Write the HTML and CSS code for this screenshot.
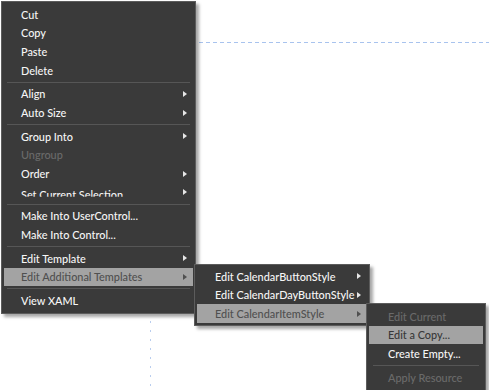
FILE: index.html
```html
<!DOCTYPE html>
<html>
<head>
<meta charset="utf-8">
<link rel="stylesheet" href="styles.css">
</head>
<body>
<div class="canvas">
  <div class="guide guide-h"></div>
  <div class="guide guide-v"></div>
</div>

<div class="menu main">
  <div class="item"><span class="label">Cut</span></div>
  <div class="item"><span class="label">Copy</span></div>
  <div class="item"><span class="label">Paste</span></div>
  <div class="item"><span class="label">Delete</span></div>
  <div class="sep"></div>
  <div class="item"><span class="label">Align</span><span class="arrow"></span></div>
  <div class="item"><span class="label">Auto Size</span><span class="arrow"></span></div>
  <div class="sep"></div>
  <div class="item"><span class="label">Group Into</span><span class="arrow"></span></div>
  <div class="item dis"><span class="label">Ungroup</span></div>
  <div class="item"><span class="label">Order</span><span class="arrow"></span></div>
  <div class="item"><span class="label clipped">Set Current Selection</span><span class="arrow"></span></div>
  <div class="sep"></div>
  <div class="item"><span class="label">Make Into UserControl...</span></div>
  <div class="item"><span class="label">Make Into Control...</span></div>
  <div class="sep"></div>
  <div class="item"><span class="label">Edit Template</span><span class="arrow"></span></div>
  <div class="item hl"><span class="label">Edit Additional Templates</span><span class="arrow"></span></div>
  <div class="sep"></div>
  <div class="item"><span class="label">View XAML</span></div>
</div>

<div class="menu sub1">
  <div class="item"><span class="label">Edit CalendarButtonStyle</span><span class="arrow"></span></div>
  <div class="item"><span class="label">Edit CalendarDayButtonStyle</span><span class="arrow"></span></div>
  <div class="item hl"><span class="label">Edit CalendarItemStyle</span><span class="arrow"></span></div>
</div>

<div class="menu sub2">
  <div class="item dis"><span class="label">Edit Current</span></div>
  <div class="item hl"><span class="label">Edit a Copy...</span></div>
  <div class="item"><span class="label">Create Empty...</span></div>
  <div class="sep"></div>
  <div class="item dis"><span class="label">Apply Resource</span></div>
</div>
</body>
</html>
```

FILE: styles.css
```css
html, body {
  margin: 0;
  padding: 0;
}
body {
  width: 489px;
  height: 390px;
  overflow: hidden;
  position: relative;
  background: #ffffff;
  font-family: Lato, "Noto Sans", sans-serif;
  font-size: 10.9px;
  font-weight: 500;
}
.canvas {
  position: absolute;
  inset: 0;
}
.guide {
  position: absolute;
}
.guide-h {
  left: 150px;
  right: 0;
  top: 42px;
  height: 1px;
  background: repeating-linear-gradient(90deg, #a8c3ee 0 4px, transparent 4px 7px);
}
.guide-v {
  left: 150px;
  top: 42px;
  bottom: 0;
  width: 1px;
  background: repeating-linear-gradient(180deg, #b9cdee 0 2px, transparent 2px 9px);
}
.menu {
  position: absolute;
  box-sizing: border-box;
  background: #3a3a3a;
  border: 1px solid #5c5c5c;
  box-shadow: 3px 3px 3px rgba(0, 0, 0, 0.35);
  padding: 3px 2px;
}
.main {
  left: 1px;
  top: 1px;
  width: 195px;
}
.sub1 {
  left: 194px;
  top: 264px;
  width: 176px;
  padding-top: 2px;
  padding-bottom: 2px;
}
.sub2 {
  left: 366px;
  top: 303px;
  width: 120px;
}
.item {
  height: 18.67px;
  display: flex;
  align-items: center;
  padding: 0 6px 0 17px;
  color: #f6f6f6;
}
.sub1 .item {
  padding-left: 18px;
}
.sub2 .item {
  padding-left: 19px;
}
.label {
  flex: 1;
  white-space: nowrap;
}
.clipped {
  clip-path: inset(0 0 4px 0);
  transform: translateY(2px);
}
.arrow {
  width: 0;
  height: 0;
  border-left: 4px solid #e6e6e6;
  border-top: 3.5px solid transparent;
  border-bottom: 3.5px solid transparent;
}
.sep {
  height: 1px;
  background: #565656;
  margin: 2px 3px;
}
.sub2 .sep {
  margin: 2px 4px;
}
.item.hl {
  background: #a3a3a3;
  color: #505050;
}
.sub2 .item.hl {
  color: #383838;
}
.item.hl .arrow {
  border-left-color: #505050;
}
.item.dis {
  color: #6a6a6a;
}
```
